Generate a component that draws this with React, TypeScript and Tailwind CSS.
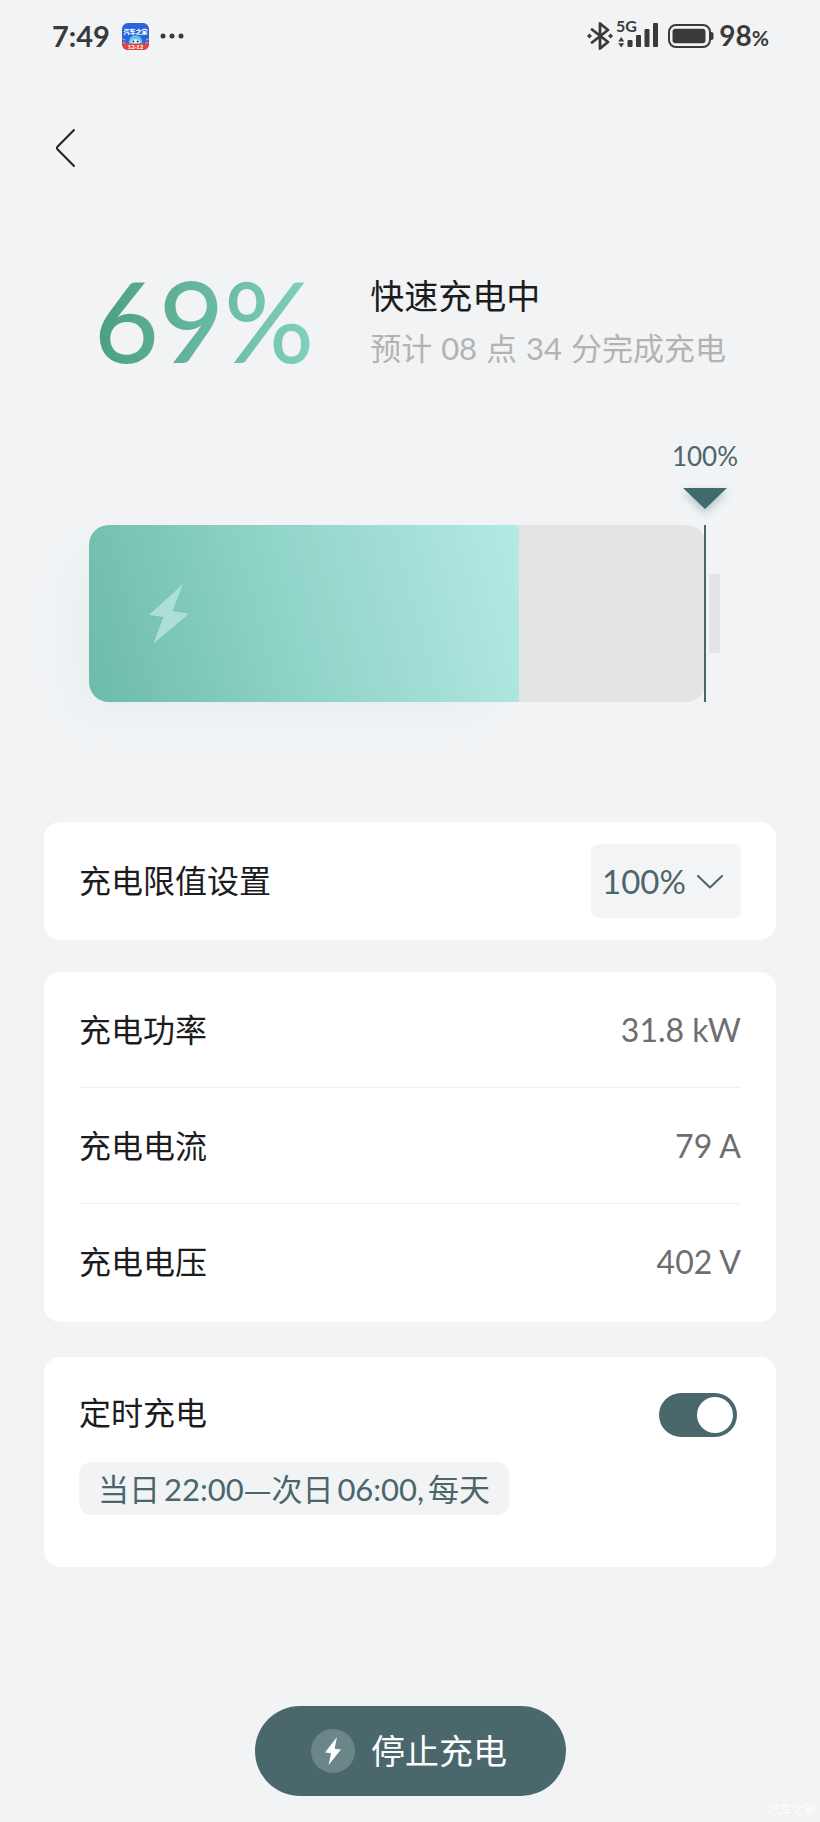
import { useState } from "react";

const LEVEL = 69.7;

const readings = [
  { label: "充电功率", value: "31.8 kW" },
  { label: "充电电流", value: "79 A" },
  { label: "充电电压", value: "402 V" },
];

function AppBadge() {
  return (
    <svg viewBox="0 0 27 27" className="w-[27px] h-[27px]" aria-hidden="true">
      <defs>
        <clipPath id="badge">
          <rect width="27" height="27" rx="6" />
        </clipPath>
      </defs>
      <g clipPath="url(#badge)">
        <rect width="27" height="27" fill="#2b66d9" />
        <circle cx="13.5" cy="19" r="6.8" fill="#5fc3f5" />
        <ellipse cx="13.5" cy="18.8" rx="4.6" ry="2.6" fill="#d9f1fb" />
        <circle cx="11.3" cy="18.6" r="1" fill="#1c3564" />
        <circle cx="15.7" cy="18.6" r="1" fill="#1c3564" />
        <path d="M0 18.8l4 1.6h19l4-1.6V27H0z" fill="#e2443e" />
        <path d="M.6 15.8l2.6 1.4M26.4 15.8l-2.6 1.4M1.4 19.4l2 .6M25.6 19.4l-2 .6" stroke="#f6b9c4" strokeWidth="1" />
        <text x="13.5" y="11" textAnchor="middle" fontSize="6" fontWeight="900" fill="#fff">
          汽车之家
        </text>
        <text x="13.5" y="25.8" textAnchor="middle" fontSize="6" fontWeight="900" fill="#fff">
          12·12
        </text>
      </g>
    </svg>
  );
}

function StatusBar() {
  return (
    <div className="flex items-center justify-between h-[72px] pl-[52px] pr-[51px] text-[#3a3a3c]">
      <div className="flex items-center">
        <span className="text-[29px] leading-8 font-bold">7:49</span>
        <span className="ml-3">
          <AppBadge />
        </span>
        <svg viewBox="0 0 24 6" className="ml-[11px] w-6 h-[6px]" fill="currentColor" aria-hidden="true">
          <circle cx="3" cy="3" r="2.5" />
          <circle cx="12" cy="3" r="2.5" />
          <circle cx="21" cy="3" r="2.5" />
        </svg>
      </div>
      <div className="flex items-center">
        <svg viewBox="0 0 26 28" className="w-[26px] h-7" fill="none" stroke="currentColor" strokeWidth="2.8" strokeLinejoin="round" strokeLinecap="round" aria-hidden="true">
          <path d="M5 7.5l16 12.5-8 6.5V1.5L21 8 5 20.5" />
          <path d="M2.4 11.4L5 14l-2.6 2.6L0 14zM23.6 11.4L26 14l-2.4 2.6L21 14z" fill="currentColor" stroke="none" />
        </svg>
        <svg viewBox="0 0 42 40" className="ml-1 w-[42px] h-10 overflow-visible" fill="currentColor" aria-hidden="true">
          <text x="-1" y="16" fontSize="16" fontWeight="700">
            5G
          </text>
          <path d="M1.2 25.4L4.2 21l3 4.4zM1.2 27.2h6l-3 4.4z" />
          <rect x="10.5" y="24" width="5" height="7" rx="1" />
          <rect x="19" y="19" width="5" height="12" rx="1" />
          <rect x="27.5" y="13" width="5" height="18" rx="1" />
          <rect x="36" y="7" width="5" height="24" rx="1" />
        </svg>
        <svg viewBox="0 0 46 24" className="ml-[9px] w-[46px] h-6" aria-hidden="true">
          <rect x="1" y="1" width="41" height="22" rx="7" fill="none" stroke="currentColor" strokeWidth="2" />
          <rect x="4.5" y="4.8" width="33" height="14.4" rx="3" fill="currentColor" />
          <path d="M42 8h1.5a2 2 0 0 1 2 2v4a2 2 0 0 1-2 2H42z" fill="currentColor" />
        </svg>
        <span className="ml-[5px] text-[28px] leading-8 font-bold">
          98<span className="text-[21px]">%</span>
        </span>
      </div>
    </div>
  );
}

function Summary() {
  return (
    <section className="flex items-center pt-10 pl-[94px] pr-8">
      <h1 className="text-[112px] leading-[112px] font-medium bg-linear-to-r from-[#4a9f81] to-[#82d1c0] bg-clip-text text-transparent">
        69%
      </h1>
      <div className="ml-14 pt-1 whitespace-nowrap">
        <p className="text-[34px] leading-[53px] text-[#1c1c1e]">快速充电中</p>
        <p className="text-[31px] leading-[53px] text-[#b3b3b4]">
          预计 <span className="mx-px">08</span> 点 <span className="mx-px">34</span> 分完成充电
        </p>
      </div>
    </section>
  );
}

function Battery() {
  return (
    <section className="mt-16" aria-label="电量">
      <div className="flex justify-end pr-[75px]">
        <div className="w-20 flex flex-col items-center">
          <span className="text-[26px] leading-8 text-[#4a666a]">100%</span>
          <svg viewBox="0 0 44 21" className="mt-4 w-11 h-[21px] overflow-visible drop-shadow-[0_4px_4px_rgba(62,107,107,0.35)]" aria-hidden="true">
            <path d="M0 0h44L22 21z" fill="#3f6b6b" />
          </svg>
        </div>
      </div>
      <div className="mt-4 flex items-center pl-[89px] pr-[100px]">
        <div className="relative flex-1 h-[177px] rounded-[20px] bg-[#e3e4e5]">
          <div
            className="h-full flex items-center pl-[60px] rounded-l-[20px] bg-linear-[75deg,#6cbba9,#8fd3c7_45%,#b5e9e4] shadow-[-24px_20px_36px_-20px_rgba(190,228,216,0.3)]"
            style={{ width: `${LEVEL}%` }}
          >
            <svg viewBox="0 0 40 60" className="w-10 h-[60px]" aria-hidden="true">
              <path d="M34 0L23.5 27 40 29.7 4.5 59.5 14.5 33 0 31z" fill="#aedfd7" />
            </svg>
          </div>
          <div className="absolute inset-y-0 right-0 w-[2px] bg-[#45686a]" />
        </div>
        <div className="ml-[3px] w-[11px] h-[79px] bg-[#e3e4e5]" />
      </div>
    </section>
  );
}

function LimitCard() {
  return (
    <section className="flex items-center justify-between h-[118px] px-[35px] rounded-2xl bg-white">
      <label htmlFor="limit" className="text-[32px] leading-10 text-[#1c1c1e]">
        充电限值设置
      </label>
      <div className="relative">
        <select
          id="limit"
          defaultValue="100"
          className="appearance-none w-[150px] h-[74px] pl-[11px] rounded-lg bg-[#f3f4f6] text-[33px] leading-10 text-[#4a666a]"
        >
          <option value="100">100%</option>
          <option value="90">90%</option>
          <option value="80">80%</option>
        </select>
        <svg
          viewBox="0 0 26 14"
          className="absolute right-[18px] top-[31px] w-[26px] h-[14px] pointer-events-none"
          fill="none"
          stroke="#4a666a"
          strokeWidth="2"
          strokeLinecap="round"
          strokeLinejoin="round"
          aria-hidden="true"
        >
          <path d="M1 1l12 11.5L25 1" />
        </svg>
      </div>
    </section>
  );
}

function ReadingsCard() {
  return (
    <dl className="mt-8 px-[35px] pb-[2px] rounded-2xl bg-white divide-y divide-[#f0f0f1]">
      {readings.map((r) => (
        <div key={r.label} className="flex items-center justify-between h-[116px]">
          <dt className="text-[32px] leading-10 text-[#1c1c1e]">{r.label}</dt>
          <dd className="text-[32px] leading-10 text-[#6e6e70]">{r.value}</dd>
        </div>
      ))}
    </dl>
  );
}

function ScheduleCard() {
  const [on, setOn] = useState(true);

  return (
    <section className="mt-[35px] pt-9 pb-[52px] pl-[35px] pr-[39px] rounded-2xl bg-white">
      <div className="flex items-start justify-between">
        <label htmlFor="schedule" className="text-[32px] leading-10 text-[#1c1c1e]">
          定时充电
        </label>
        <input
          id="schedule"
          type="checkbox"
          role="switch"
          checked={on}
          onChange={(e) => setOn(e.target.checked)}
          className="appearance-none flex items-center w-[78px] h-11 px-1 rounded-full bg-gray-300 checked:bg-[#4a686c] checked:justify-end before:block before:size-9 before:rounded-full before:bg-white"
        />
      </div>
      <button
        type="button"
        className="flex items-center mt-[25px] h-[53px] px-[19px] rounded-xl bg-[#f1f3f5] text-[31px] leading-10 text-[#4a666a] whitespace-nowrap"
      >
        当日
        <span className="ml-1">22:00</span>
        <span className="font-['Noto_Sans_CJK_SC',sans-serif]">—</span>
        次日
        <span className="mx-1">06:00,</span>
        每天
      </button>
    </section>
  );
}

export default function App() {
  return (
    <main className="relative pb-[26px] bg-[#f1f3f5] font-['Lato','Noto_Sans_CJK_SC',sans-serif]">
      <StatusBar />
      <nav className="flex items-center h-[152px] pl-[55px]">
        <button type="button" aria-label="返回">
          <svg viewBox="0 0 22 40" className="w-[22px] h-10" fill="none" stroke="#222" strokeWidth="2" strokeLinecap="round" strokeLinejoin="round" aria-hidden="true">
            <path d="M19 2L2.2 19a1.6 1.6 0 0 0 0 2L19 38" />
          </svg>
        </button>
      </nav>
      <Summary />
      <Battery />
      <div className="mt-[120px] px-11">
        <LimitCard />
        <ReadingsCard />
        <ScheduleCard />
      </div>
      <div className="mt-[139px] flex justify-center">
        <button
          type="button"
          className="flex items-center justify-center gap-4 w-[311px] h-[90px] pr-[2px] rounded-full bg-[#4a686c] text-[34px] leading-10 text-white"
        >
          <span className="flex items-center justify-center size-11 rounded-full bg-[#6b8689]">
            <svg viewBox="0 0 40 60" className="w-4 h-7" aria-hidden="true" preserveAspectRatio="none">
              <path d="M30 0L24 25 40 27 9 60 15 35 0 33z" fill="#fff" />
            </svg>
          </span>
          停止充电
        </button>
      </div>
      <span className="absolute right-1 bottom-1 text-xs text-white/80">汽车之家</span>
    </main>
  );
}
